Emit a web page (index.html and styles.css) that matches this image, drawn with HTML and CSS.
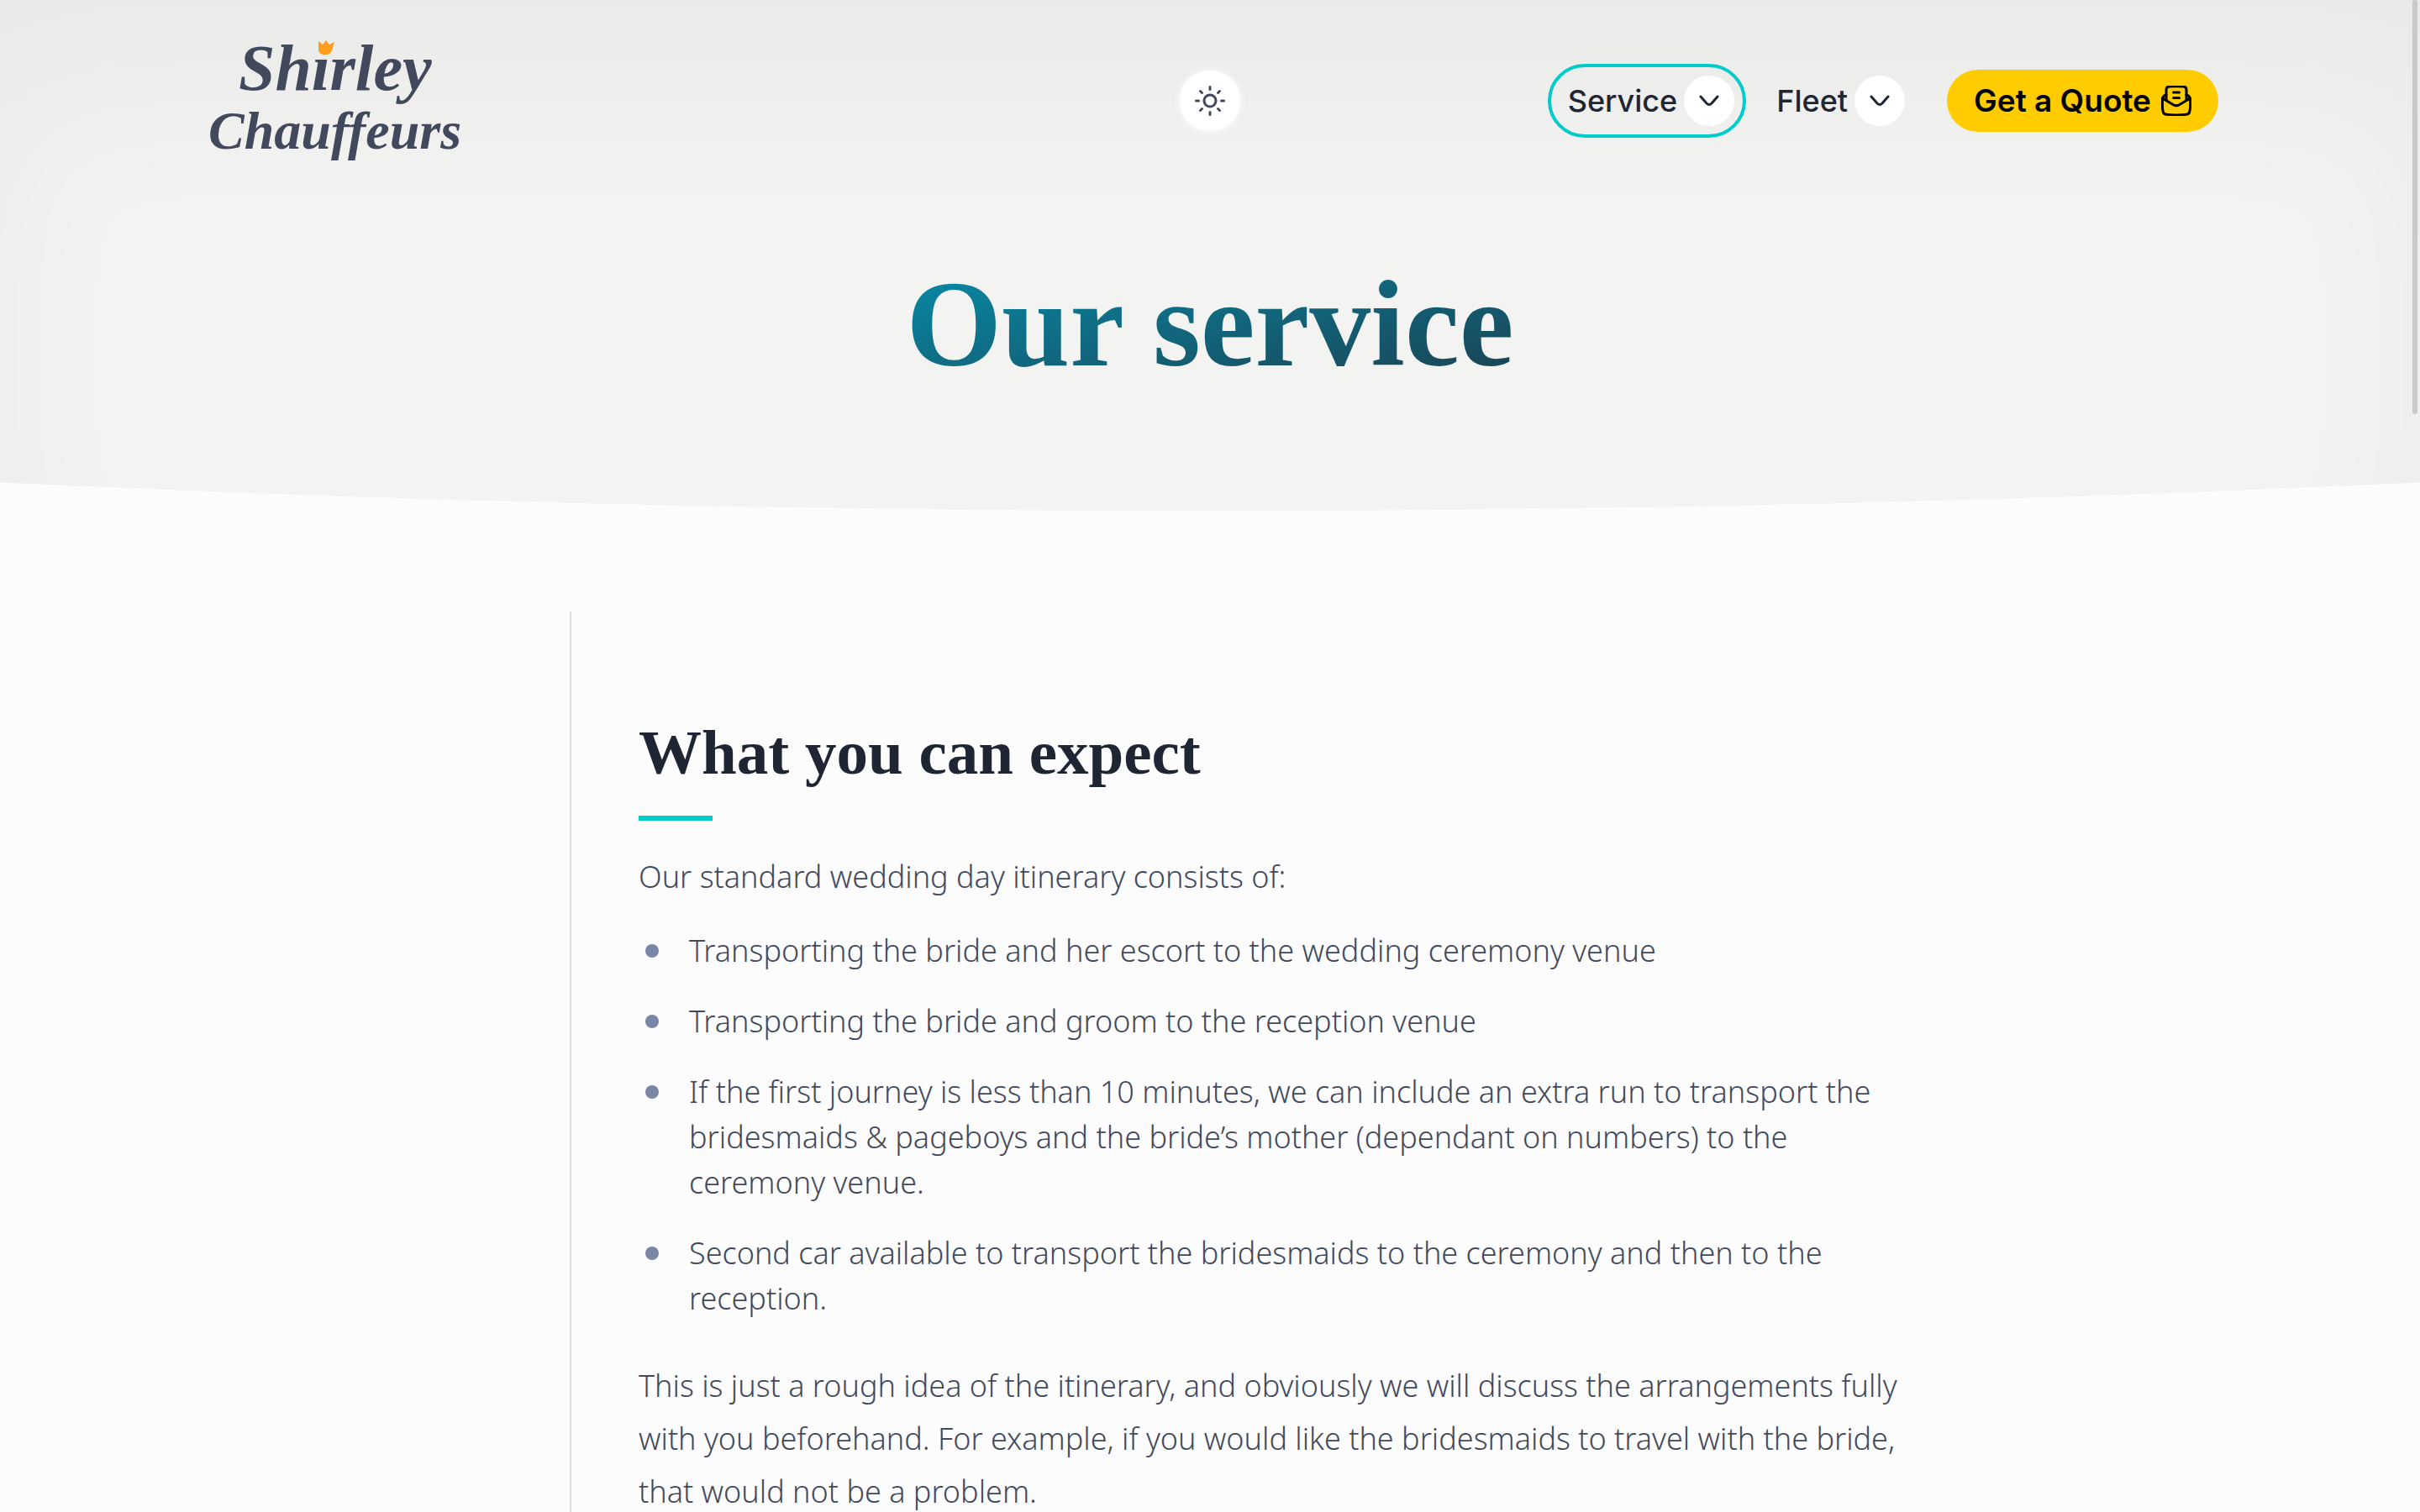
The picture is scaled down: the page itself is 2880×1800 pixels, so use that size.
FILE: index.html
```html
<!DOCTYPE html>
<html lang="en">
<head>
<meta charset="utf-8">
<meta name="viewport" content="width=device-width, initial-scale=1">
<title>Our service – Shirley Chauffeurs</title>
<link rel="stylesheet" href="styles.css">
</head>
<body>
<header class="hero">
  <div class="topbar">
    <a class="logo" href="#" aria-label="Shirley Chauffeurs">
      <svg width="320" height="150" viewBox="0 0 320 150">
        <text class="logo-text logo-first" x="44" y="62">Shirley</text>
        <text class="logo-text logo-second" x="8" y="132">Chauffeurs</text>
        <path class="logo-tulip" d="M139 4l5 4 4-5 4 5 6-3-3 10q-3 6-8 5-7 0-8-5z"/>
      </svg>
    </a>
    <button class="theme" type="button" aria-label="Switch theme">
      <svg class="icon" width="36" height="36" viewBox="0 0 36 36">
        <circle cx="18" cy="18" r="7"/>
        <path d="M18 1.500v3M18 31.500v3M1.500 18h3M31.500 18h3M6.500 6.500l2 2M27.500 27.500l2 2M6.500 29.500l2-2M27.500 8.500l2-2"/>
      </svg>
    </button>
    <nav class="nav">
      <button class="menu menu-active" type="button">Service
        <span class="chevron"><svg class="icon" width="24" height="14" viewBox="0 0 24 14"><path d="M2 2l7 8q3 3 6 0l7-8"/></svg></span>
      </button>
      <button class="menu" type="button">Fleet
        <span class="chevron"><svg class="icon" width="24" height="14" viewBox="0 0 24 14"><path d="M2 2l7 8q3 3 6 0l7-8"/></svg></span>
      </button>
      <a class="quote" href="#">Get a Quote
        <svg class="icon" width="36" height="36" viewBox="0 0 36 36">
          <path d="M6 17V5q0-4 4-4 8-.6 16 0 4 0 4 4v12"/>
          <path d="M6 11q-4 1-4.500 5-.5 8 .5 14 .6 4 4 4.300 12 1.200 24 0 3.400-.3 4-4.300 1-6 .5-14-.5-4-4.500-5"/>
          <path d="M1.500 15l13 7.700q3.500 2 7 0l13-7.700M14.500 8h7M14.500 14.500h7"/>
        </svg>
      </a>
    </nav>
  </div>
  <h1 class="title"><span class="title-text">Our service</span></h1>
</header>
<main class="main">
  <article class="article">
    <h2 class="heading">What you can expect</h2>
    <p>Our standard wedding day itinerary consists of:</p>
    <ul class="list">
      <li><span>Transporting the bride and her escort to the wedding ceremony venue</span></li>
      <li><span>Transporting the bride and groom to the reception venue</span></li>
      <li><span>If the first journey is less than 10 minutes, we can include an extra run to transport the bridesmaids &amp; pageboys and the bride’s mother (dependant on numbers) to the ceremony venue.</span></li>
      <li><span>Second car available to transport the bridesmaids to the ceremony and then to the reception.</span></li>
    </ul>
    <p>This is just a rough idea of the itinerary, and obviously we will discuss the arrangements fully with you beforehand. For example, if you would like the bridesmaids to travel with the bride, that would not be a problem.</p>
  </article>
</main>
<div class="scroll-thumb"></div>
</body>
</html>
```
FILE: styles.css
```css
:root {
  --ink: #1f2533;
  --text: #42495c;
  --accent: #00cccb;
}

* { box-sizing: border-box; }

body {
  margin: 0;
  height: 100vh;
  overflow: hidden;
  background: #fcfcfc;
  color: var(--text);
  font: 300 36px/63px "Noto Sans", "Open Sans", sans-serif;
}

.hero {
  padding-bottom: 134px;
  background: #f3f3f1;
  box-shadow: inset 0 120px 180px rgba(0, 0, 0, .04);
  clip-path: ellipse(152% 100% at 50% 0);
}

.topbar {
  display: grid;
  grid-template-columns: 1fr auto 1fr;
  align-items: center;
  height: 240px;
  padding: 0 240px;
}

.logo { justify-self: start; }
.logo svg { display: block; }
.logo-text {
  fill: var(--text);
  font-family: "Liberation Serif", serif;
  font-style: italic;
  font-weight: 700;
}
.logo-first { font-size: 78px; }
.logo-second { font-size: 64px; }
.logo-tulip { fill: #ff9d1c; }

.icon {
  display: block;
  flex: none;
  fill: none;
  stroke: currentColor;
  stroke-width: 3;
  stroke-linecap: round;
  stroke-linejoin: round;
}

.theme {
  display: grid;
  place-items: center;
  width: 72px;
  height: 72px;
  padding: 0;
  border: 0;
  border-radius: 50%;
  background: #fff;
  box-shadow: 0 0 8px #fff;
  color: var(--text);
}

.nav {
  display: flex;
  justify-self: end;
  align-items: center;
  gap: 12px;
}

.menu {
  display: flex;
  align-items: center;
  gap: 8px;
  height: 88px;
  padding: 0 10px 0 20px;
  border: 4px solid transparent;
  border-radius: 44px;
  background: none;
  color: var(--ink);
  font: 500 36px/48px Inter, sans-serif;
}
.menu-active { border-color: var(--accent); }

.chevron {
  display: grid;
  place-items: center;
  width: 60px;
  height: 60px;
  border-radius: 50%;
  background: #fff;
}

.quote {
  display: flex;
  align-items: center;
  gap: 12px;
  height: 74px;
  margin-left: 24px;
  padding: 0 32px;
  border-radius: 37px;
  background: #fc0;
  color: #000;
  font: 600 37px/48px Inter, sans-serif;
  text-decoration: none;
}

.title {
  margin: 58px 0 0;
  text-align: center;
  font: 700 146px/176px "Liberation Serif", serif;
}
.title-text {
  display: inline-block;
  background: linear-gradient(to bottom right, #068fac, #1c3d4d);
  background-clip: text;
  -webkit-background-clip: text;
  color: transparent;
}

.main {
  display: grid;
  grid-template-columns: 438px 1fr 360px;
  padding: 120px 240px 0;
}

.article {
  grid-column: 2;
  padding: 120px 0 120px 80px;
  border-left: 2px solid #dcdcd8;
}
.article p { margin: 0; }

.heading {
  margin: 0 0 35px;
  color: var(--ink);
  font: 700 75px/96px "Liberation Serif", serif;
}
.heading::after {
  content: "";
  display: block;
  width: 88px;
  height: 6px;
  margin-top: 27px;
  background: var(--accent);
}

.list {
  display: flex;
  flex-direction: column;
  gap: 30px;
  margin: 30px 0 45px;
  padding: 0;
  list-style: none;
  line-height: 54px;
}
.list li {
  display: flex;
  gap: 36px;
  padding-left: 8px;
}
.list li::before {
  content: "";
  flex: none;
  width: 16px;
  height: 16px;
  margin-top: 19px;
  border-radius: 50%;
  background: #7987a6;
}

.scroll-thumb {
  position: fixed;
  top: 0;
  right: 3px;
  width: 6px;
  height: 493px;
  border-radius: 3px;
  background: #c9c9c9;
}
```
